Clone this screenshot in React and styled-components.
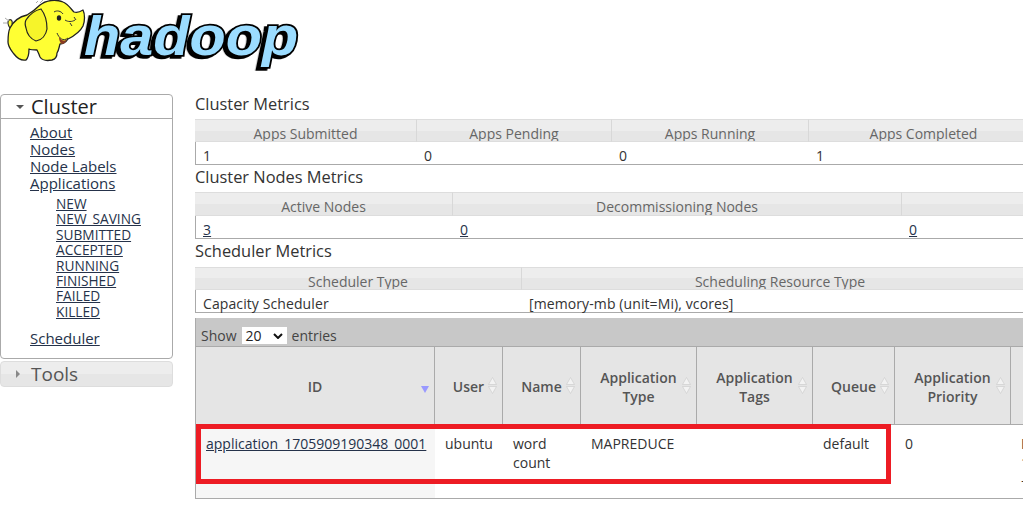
import React from 'react';
import styled, { createGlobalStyle } from 'styled-components';

const Global = createGlobalStyle`
  html, body { margin: 0; padding: 0; background: #fff; }
  body { font-family: "Open Sans", "Noto Sans", sans-serif; font-size: 14px; color: #333; overflow: hidden; }
  * { box-sizing: border-box; }
  a { color: #25324a; }
`;

const Page = styled.div`
  position: relative;
  width: 1023px;
  height: 508px;
  overflow: hidden;
`;
const Header = styled.header`
  height: 94px;
`;
const Logo = styled.svg`
  display: block;
  width: 310px;
  height: 80px;
`;
const Body = styled.div`
  display: flex;
  align-items: flex-start;
`;
const Side = styled.nav`
  width: 173px;
  flex: none;
  margin-right: 22px;
`;
const Panel = styled.div`
  border: 1px solid #aaa;
  border-radius: 4px;
  height: 265px;
`;
const PanelHead = styled.div`
  display: flex;
  align-items: center;
  height: 24px;
  border-bottom: 1px solid #aaa;
  font-size: 20px;
  color: #222;
  padding-left: 15px;
  gap: 7px;
`;
const Closed = styled.div`
  display: flex;
  align-items: center;
  height: 26px;
  margin-top: 2px;
  padding-left: 15px;
  gap: 11px;
  border: 1px solid #ddd;
  border-radius: 4px;
  font-size: 19px;
  color: #555;
  background: linear-gradient(#ededed 0 50%, #e6e6e6 50% 100%);
`;
const Caret = styled.span`
  width: 0;
  height: 0;
  ${p => p.$open
    ? 'border-left:4px solid transparent;border-right:4px solid transparent;border-top:4px solid #555;'
    : 'border-top:4px solid transparent;border-bottom:4px solid transparent;border-left:4px solid #888;'}
`;
const NavList = styled.ul`
  list-style: none;
  margin: 0;
  padding: 5px 0 0 29px;
  line-height: 17px;
  font-size: 15px;
`;
const SubList = styled.ul`
  list-style: none;
  margin: 4px 0 11px;
  padding-left: 26px;
  font-size: 13.7px;
  line-height: 15.4px;
`;
const Main = styled.main`
  flex: 1;
  min-width: 0;
`;
const SectionTitle = styled.h3`
  margin: 0;
  font-size: 16.4px;
  font-weight: 400;
  line-height: ${p => p.$lh}px;
  color: #333;
  height: ${p => p.$h}px;
`;
const MetricTable = styled.div`
  display: grid;
  grid-template-columns: ${p => p.$cols};
  grid-template-rows: ${p => p.$head || 23}px 1fr;
  width: 844px;
  height: ${p => p.$h || 46}px;
  border-left: 1px solid #aaa;
  border-bottom: 1px solid #aaa;
`;
const MetricHead = styled.div`
  background: linear-gradient(#ededed 0 50%, #e6e6e6 50% 100%);
  border-top: 1px solid #ddd;
  border-bottom: 1px solid #ddd;
  border-right: 1px solid #d8d8d8;
  text-align: center;
  color: #666;
  font-size: 14px;
  line-height: 27px;
  overflow: hidden;
  white-space: nowrap;
  &:first-child { margin-left: -1px; }
`;
const MetricCell = styled.div`
  padding: 4px 0 0 7px;
  font-size: 14px;
  letter-spacing: 0.1px;
  line-height: 19px;
  white-space: nowrap;
  color: #333;
`;
const Toolbar = styled.div`
  display: flex;
  align-items: center;
  height: 29px;
  margin-top: 5px;
  padding: 7px 0 0 5px;
  gap: 5px;
  width: 844px;
  background: #c8c8c8;
  border-left: 1px solid #aaa;
  border-bottom: 1px solid #aaa;
  color: #444;
`;
const Select = styled.span`
  display: flex;
  align-items: center;
  justify-content: space-between;
  width: 45px;
  height: 17px;
  background: #fff;
  padding: 0 4px;
  color: #222;
  font-size: 14px;
`;
const Grid = styled.div`
  display: grid;
  grid-template-columns: 239px 68px 78px 116px 116px 82px 116px 110px;
  grid-template-rows: 78px 74px;
  width: 1005px;
  border-left: 1px solid #aaa;
`;
const Th = styled.div`
  position: relative;
  display: flex;
  align-items: center;
  justify-content: center;
  text-align: center;
  background: #e5e5e5;
  border-right: 1px solid #aaa;
  border-bottom: 1px solid #aaa;
  color: #555;
  font-weight: 600;
  font-size: 14px;
  line-height: 19px;
  padding-top: 2px;
`;
const Sort = styled.svg`
  position: absolute;
  right: 5px;
  top: 30px;
  width: 10px;
  height: 17px;
`;
const Td = styled.div`
  padding: 9px 10px 0;
  font-size: 14px;
  line-height: 19px;
  color: #333;
  border-bottom: 1px solid #aaa;
  background: ${p => (p.$sorted ? '#f6f6f6' : '#fff')};
  white-space: ${p => (p.$wrap ? 'normal' : 'nowrap')};
  overflow: hidden;
`;
const Highlight = styled.div`
  position: absolute;
  left: 196px;
  top: 424px;
  width: 695px;
  height: 60px;
  border: 5px solid #ed1c24;
`;

const SortIcon = ({ active }) => (
  <Sort viewBox="0 0 10 17">
    {active ? (
      <path d="M2 9h8l-4 7z" fill="#9999ff" />
    ) : (
      <>
        <path d="M5.500 .5 1.500 7.500h8z" fill="#f3f3f3" stroke="#cfcfcf" strokeWidth=".7" />
        <path d="M5.500 16.500 1.500 9.500h8z" fill="#f3f3f3" stroke="#cfcfcf" strokeWidth=".7" />
      </>
    )}
  </Sort>
);

const LogoWord = styled.text`
  font-family: "Liberation Sans", sans-serif;
  font-weight: 700;
  font-style: italic;
  font-size: 56px;
  fill: #9bdcff;
  stroke: #000;
  stroke-width: 3.5px;
  paint-order: stroke;
  filter: drop-shadow(-3px 2px 0 #000);
`;

const HadoopLogo = () => (
  <Logo viewBox="0 0 310 80">
    <LogoWord transform="translate(84 55) scale(1.06 1)">hadoop</LogoWord>
    <path d="M10 28C8 25 7 22 9 20c2-1 4 1 3 4" fill="#ffff33" stroke="#333" strokeWidth="1.2" />
    <path d="M10 28C13 22 18 17 27 15c5-3 9-6 13-10 6-5 16-6 23-3 5 2 8 7 11 10 3 1 6 0 9-2 2 4 2 11 0 16-3 6-9 10-15 13-2 3-5 5-8 5-1 3-1 6-3 9 0 3-1 6-5 7-5 1-10 0-12-3-1-3-2-5-3-7-3 0-6 0-8-1 0 4 0 8-3 11-5 1-9-2-12-6-3-4-6-7-6-12 0-6 0-10 2-14z" fill="#ffff33" stroke="#222" strokeWidth="1.3" strokeLinejoin="round" />
    <path d="M26 20c4-6 10-10 15-11 4 5 6 13 6 20-1 6-5 11-11 12-5-2-9-7-10-13-1-3-1-6 0-8z" fill="#f6f42a" stroke="#222" strokeWidth="1.2" />
    <ellipse cx="59" cy="18" rx="2.200" ry="2.800" fill="#222" />
    <path d="M54 12c3-2 7-1 9 2M65 20c3 2 7 2 10 0M70 23l2 3M74 17l2 3M57 33c2 5 6 9 11 5" fill="none" stroke="#333" strokeWidth="1" />
    <path d="M59 37c2 3 5 5 8 2-1 3-3 5-5 5-2-1-3-4-3-7z" fill="#8a3a22" />
    <path d="M5 18l4 3M3 23l4 0M40 3l3-3M36 3l2-2" stroke="#aaa" strokeWidth="1" />
  </Logo>
);

const metrics1 = ['Apps Submitted', 'Apps Pending', 'Apps Running', 'Apps Completed'];
const metrics2 = ['Active Nodes', 'Decommissioning Nodes', ''];
const metrics3 = ['Scheduler Type', 'Scheduling Resource Type'];
const subs = ['NEW', 'NEW_SAVING', 'SUBMITTED', 'ACCEPTED', 'RUNNING', 'FINISHED', 'FAILED', 'KILLED'];

export default function App() {
  return (
    <Page>
      <Global />
      <Header><HadoopLogo /></Header>
      <Body>
        <Side>
          <Panel>
            <PanelHead><Caret $open />Cluster</PanelHead>
            <NavList>
              <li><a href="#a">About</a></li>
              <li><a href="#a">Nodes</a></li>
              <li><a href="#a">Node Labels</a></li>
              <li>
                <a href="#a">Applications</a>
                <SubList>
                  {subs.map(s => <li key={s}><a href="#a">{s}</a></li>)}
                </SubList>
              </li>
              <li><a href="#a">Scheduler</a></li>
            </NavList>
          </Panel>
          <Closed><Caret />Tools</Closed>
        </Side>
        <Main>
          <SectionTitle $h={25} $lh={20}>Cluster Metrics</SectionTitle>
          <MetricTable $cols="221px 195px 197px 230px">
            {metrics1.map(m => <MetricHead key={m}>{m}</MetricHead>)}
            <MetricCell>1</MetricCell><MetricCell>0</MetricCell><MetricCell>0</MetricCell><MetricCell>1</MetricCell>
          </MetricTable>
          <SectionTitle $h={27} $lh={24}>Cluster Nodes Metrics</SectionTitle>
          <MetricTable $cols="257px 449px 137px" $h={47} $head={24}>
            {metrics2.map(m => <MetricHead key={m || 'x'}>{m}</MetricHead>)}
            <MetricCell><a href="#a">3</a></MetricCell><MetricCell><a href="#a">0</a></MetricCell><MetricCell><a href="#a">0</a></MetricCell>
          </MetricTable>
          <SectionTitle $h={28} $lh={24}>Scheduler Metrics</SectionTitle>
          <MetricTable $cols="326px 517px">
            {metrics3.map(m => <MetricHead key={m}>{m}</MetricHead>)}
            <MetricCell>Capacity Scheduler</MetricCell><MetricCell>[memory-mb (unit=Mi), vcores]</MetricCell>
          </MetricTable>
          <Toolbar>
            Show <Select>20<svg width="10" height="6" viewBox="0 0 10 6"><path d="M1 1l4 4 4-4" fill="none" stroke="#111" strokeWidth="2" /></svg></Select> entries
          </Toolbar>
          <Grid>
            <Th>ID<SortIcon active /></Th>
            <Th>User<SortIcon /></Th>
            <Th>Name<SortIcon /></Th>
            <Th>Application<br />Type<SortIcon /></Th>
            <Th>Application<br />Tags<SortIcon /></Th>
            <Th>Queue<SortIcon /></Th>
            <Th>Application<br />Priority<SortIcon /></Th>
            <Th />
            <Td $sorted><a href="#a">application_1705909190348_0001</a></Td>
            <Td>ubuntu</Td>
            <Td $wrap>word count</Td>
            <Td>MAPREDUCE</Td>
            <Td />
            <Td>default</Td>
            <Td>0</Td>
            <Td>Mon Jan 22<br />16:43:10<br />+0900 2024</Td>
          </Grid>
        </Main>
      </Body>
      <Highlight />
    </Page>
  );
}
